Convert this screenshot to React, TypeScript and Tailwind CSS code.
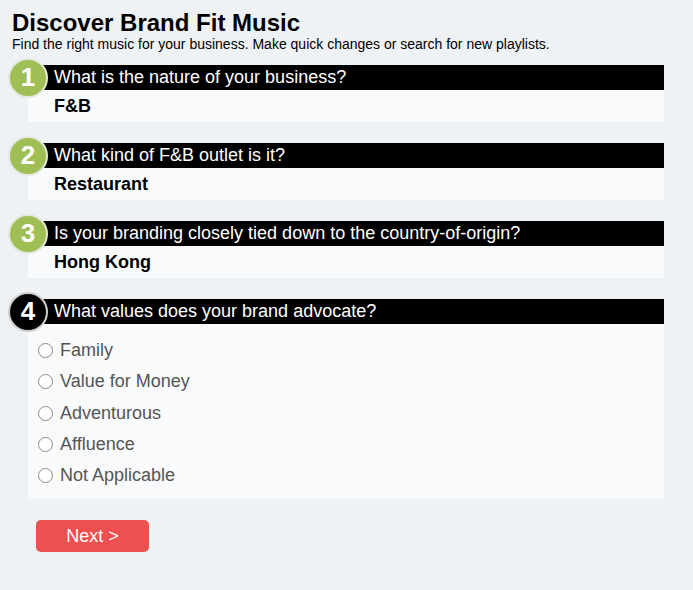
import React from 'react';

const questions = [
  { n: '1', q: 'What is the nature of your business?', a: 'F&B' },
  { n: '2', q: 'What kind of F&B outlet is it?', a: 'Restaurant' },
  { n: '3', q: 'Is your branding closely tied down to the country-of-origin?', a: 'Hong Kong' },
];

const values = ['Family', 'Value for Money', 'Adventurous', 'Affluence', 'Not Applicable'];

const Badge = ({ n, active }: { n: string; active?: boolean }) => (
  <div
    className={`absolute -left-[20px] top-1/2 -translate-y-1/2 w-[40px] h-[40px] rounded-full border-2 flex items-center justify-center text-white text-[26px] font-bold ${
      active ? 'bg-black border-[#d0d0d0]' : 'bg-[#9fbf55] border-[#e3e8dc]'
    }`}
  >
    {n}
  </div>
);

const QuestionBar = ({ n, q, active }: { n: string; q: string; active?: boolean }) => (
  <div className="relative h-[25px] bg-black text-white text-[18px] leading-[25px] pl-[26px]">
    <Badge n={n} active={active} />
    {q}
  </div>
);

export default function App() {
  return (
    <div className="min-h-[590px] bg-[#eff2f5] font-['Liberation_Sans',Arial,sans-serif] text-black pt-[9px]">
      <div className="pl-[12px]">
        <h1 className="text-[24px] font-bold leading-[28px]">Discover Brand Fit Music</h1>
        <p className="text-[14px] leading-[14px]">
          Find the right music for your business. Make quick changes or search for new playlists.
        </p>
      </div>
      <div className="ml-[28px] w-[636px] mt-[14px] flex flex-col gap-[21px]">
        {questions.map((item) => (
          <div key={item.n}>
            <QuestionBar n={item.n} q={item.q} />
            <div className="h-[32px] bg-[#f9fafc] pl-[26px] text-[18px] font-bold leading-[32px]">{item.a}</div>
          </div>
        ))}
        <div>
          <QuestionBar n="4" q="What values does your brand advocate?" active />
          <div className="bg-[#f9fafc] pt-[11px] pb-[8px] pl-[10px] flex flex-col">
            {values.map((v) => (
              <label key={v} className="flex items-center h-[31.25px] text-[18px] text-[#555]">
                <span className="w-[15px] h-[15px] rounded-full border border-[#8a8a8a] bg-white mr-[7px]" />
                {v}
              </label>
            ))}
          </div>
        </div>
      </div>
      <div className="pl-[36px] mt-[21px]">
        <button className="w-[113px] h-[32px] bg-[#ee4f4f] text-white text-[18px] rounded-[5px]">Next &gt;</button>
      </div>
    </div>
  );
}
